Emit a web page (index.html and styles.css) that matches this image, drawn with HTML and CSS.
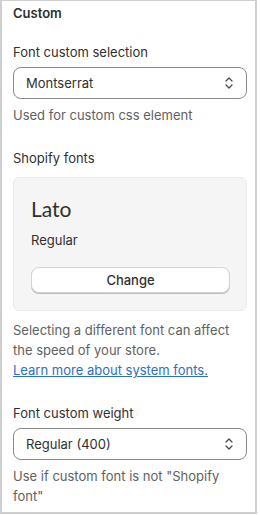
FILE: index.html
```html
<!DOCTYPE html>
<html lang="en">
<head>
    <meta charset="UTF-8">
    <meta name="viewport" content="width=device-width, initial-scale=1.0">
    <title>Custom fonts</title>
    <link rel="stylesheet" href="styles.css">
</head>
<body>

<div class="panel">
    <h3 class="panel-title">Custom</h3>

    <div class="field field-first">
        <label class="field-label">Font custom selection</label>
        <div class="select">
            <span>Montserrat</span>
            <svg class="chevrons" width="10" height="14" viewBox="0 0 10 14"><path d="M2 5l3-3 3 3M2 9l3 3 3-3" fill="none" stroke="#4a4a4a" stroke-width="1.3" stroke-linecap="round" stroke-linejoin="round"/></svg>
        </div>
        <p class="help">Used for custom css element</p>
    </div>

    <div class="field">
        <label class="field-label label-card">Shopify fonts</label>
        <div class="font-card">
            <div class="font-name">Lato</div>
            <div class="font-style">Regular</div>
            <button class="change-button">Change</button>
        </div>
        <p class="help help-card">Selecting a different font can affect the speed of your store.<br>
            <a href="#">Learn more about system fonts.</a></p>
    </div>

    <div class="field">
        <label class="field-label">Font custom weight</label>
        <div class="select">
            <span>Regular (400)</span>
            <svg class="chevrons" width="10" height="14" viewBox="0 0 10 14"><path d="M2 5l3-3 3 3M2 9l3 3 3-3" fill="none" stroke="#4a4a4a" stroke-width="1.3" stroke-linecap="round" stroke-linejoin="round"/></svg>
        </div>
        <p class="help">Use if custom font is not "Shopify font"</p>
    </div>
</div>

</body>
</html>
```

FILE: styles.css
```css
body {
    margin: 0;
    font-family: Inter, "Noto Sans", sans-serif;
    font-size: 13px;
    color: #303030;
}

/* Outer settings panel */
.panel {
    box-sizing: border-box;
    width: 257px;
    height: 514px;
    border: 2px solid #cfcfcf;
    border-top-width: 1px;
    padding: 2px 8px 0 11px;
}

.panel-title {
    margin: 0;
    font-size: 13px;
    font-weight: 600;
    line-height: 20px;
}

.field {
    margin-top: 23px;
}

.field-first {
    margin-top: 19px;
}

.field-label {
    display: block;
    line-height: 20px;
    margin-bottom: 5px;
}

.label-card {
    margin-bottom: 9px;
}

/* Fake select box */
.select {
    display: flex;
    align-items: center;
    justify-content: space-between;
    height: 32px;
    box-sizing: border-box;
    padding: 0 12px;
    border: 1px solid #8a8a8a;
    border-radius: 8px;
    background: #fff;
}

.chevrons {
    display: block;
}

.help {
    margin: 6px 0 0;
    line-height: 20px;
    color: #616161;
}

.help-card {
    margin-top: 9px;
}

.help a {
    color: #2c6ecb;
    text-decoration: underline;
}

/* Shopify font preview card */
.font-card {
    box-sizing: border-box;
    height: 134px;
    background: #f5f5f5;
    border: 1px solid #ebebeb;
    border-radius: 6px;
    padding: 16px 16px 0 17px;
}

.font-name {
    font-family: Lato, sans-serif;
    font-size: 21px;
    line-height: 30px;
}

.font-style {
    margin-top: 6px;
    line-height: 20px;
}

.change-button {
    display: block;
    width: 100%;
    height: 26px;
    margin-top: 17px;
    background: #fff;
    border: 1px solid #d4d4d4;
    border-radius: 8px;
    box-shadow: 0 1px 0 #bdbdbd;
    font-family: Inter, sans-serif;
    font-size: 13px;
    font-weight: 550;
    color: #303030;
}
```
